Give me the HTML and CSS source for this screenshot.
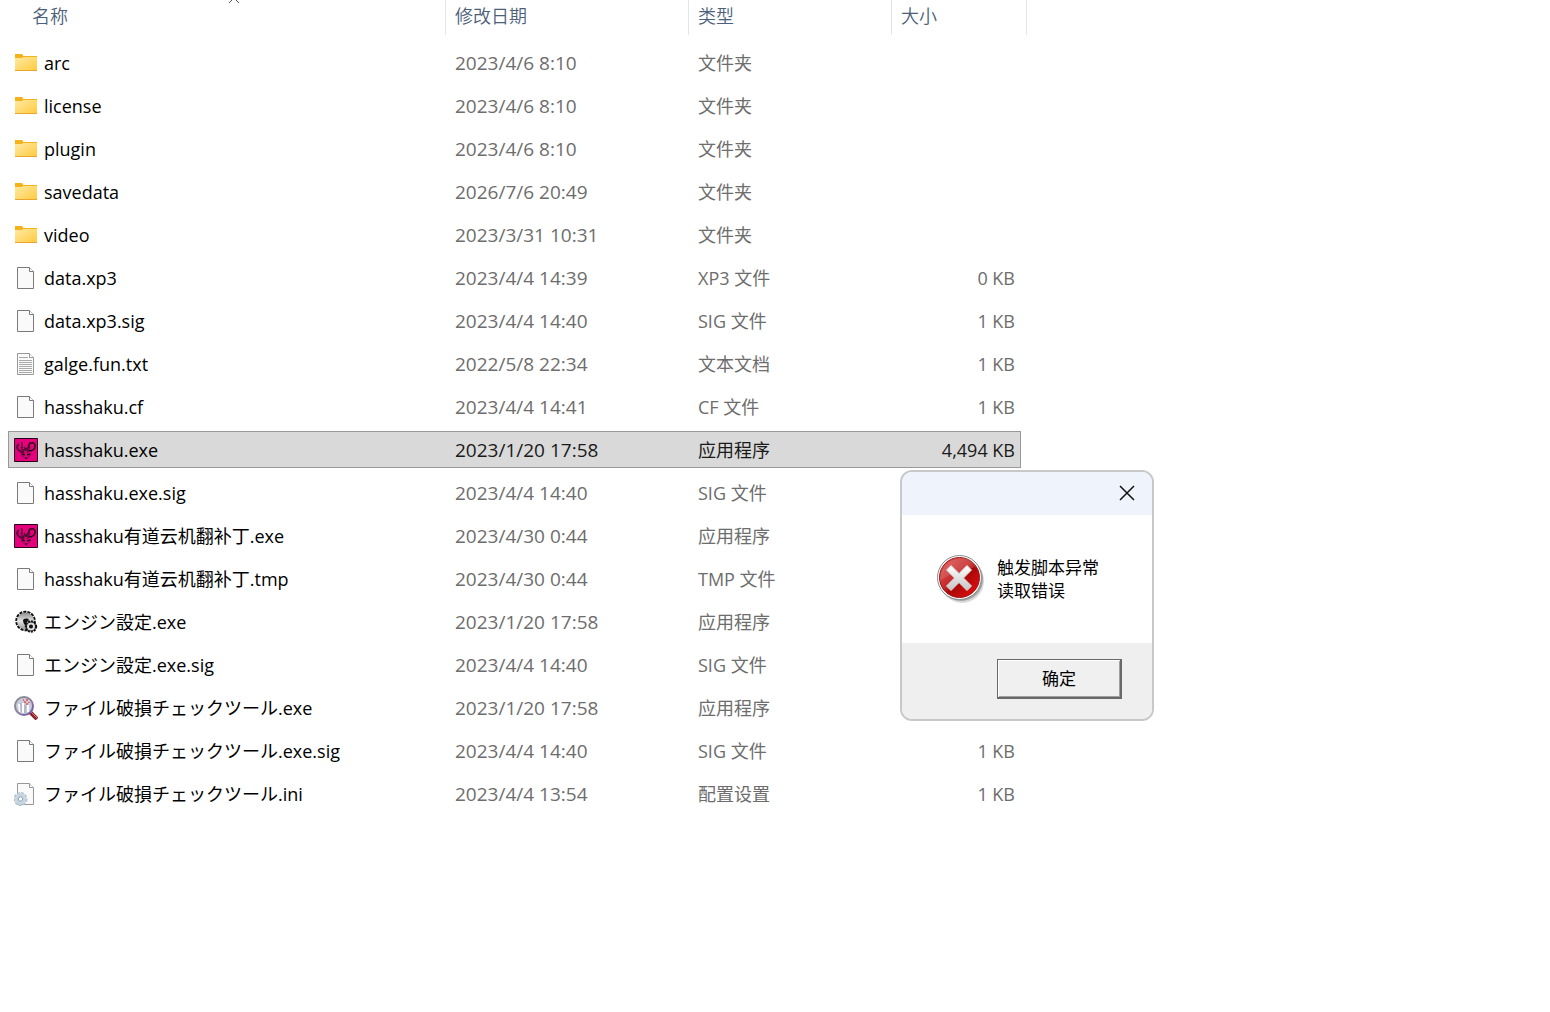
FILE: index.html
```html
<!DOCTYPE html>
<html lang="zh-CN">
<head>
    <meta charset="UTF-8">
    <meta name="viewport" content="width=device-width, initial-scale=1.0">
    <title>hasshaku</title>
    <link rel="stylesheet" href="styles.css">
</head>
<body>

    <!-- Shared icons -->
    <svg class="sprite" aria-hidden="true">
        <defs>
            <linearGradient id="folder-fill" x1="0" y1="0" x2="1" y2="1">
                <stop offset="0" stop-color="#ffe9a3"/>
                <stop offset="1" stop-color="#ffcb3d"/>
            </linearGradient>
            <linearGradient id="gear-fill" x1="0" y1="0" x2="0" y2="1">
                <stop offset="0" stop-color="#8a8a8a"/>
                <stop offset="0.5" stop-color="#e4e4e4"/>
                <stop offset="1" stop-color="#999"/>
            </linearGradient>
            <linearGradient id="rim-fill" x1="0" y1="0" x2="1" y2="1">
                <stop offset="0" stop-color="#8c8c8c"/>
                <stop offset="0.5" stop-color="#8a84a0"/>
                <stop offset="1" stop-color="#6a4fb0"/>
            </linearGradient>
            <linearGradient id="error-fill" x1="0" y1="0" x2="1" y2="1">
                <stop offset="0" stop-color="#e05a5a"/>
                <stop offset="0.45" stop-color="#c42a2a"/>
                <stop offset="0.55" stop-color="#a80808"/>
                <stop offset="1" stop-color="#f01010"/>
            </linearGradient>
            <linearGradient id="cross-fill" x1="0" y1="0" x2="0" y2="1">
                <stop offset="0" stop-color="#fff"/>
                <stop offset="1" stop-color="#c4c4c4"/>
            </linearGradient>
        </defs>
        <symbol id="folder" viewBox="0 0 24 24">
            <path d="M1 3h7l1 1v1h14v3H1z" fill="#f5b21a"/>
            <path d="M1 7h7l1-1h14v14H1z" fill="url(#folder-fill)"/>
            <path d="M1 19.500h22" stroke="#eaa62c"/>
        </symbol>
        <symbol id="file" viewBox="0 0 24 24">
            <path d="M3.500 1.500h12l4 4v17h-16z" fill="#fafafa" stroke="#7a7a7a"/>
            <path d="M15.500 1.500v4h4" fill="#fff" stroke="#7a7a7a"/>
        </symbol>
        <symbol id="text" viewBox="0 0 24 24">
            <path d="M3.500 1.500h12l4 4v17h-16z" fill="#fafafa" stroke="#999"/>
            <path d="M15.500 1.500v4h4" fill="#fff" stroke="#999"/>
            <path d="M5 5.500h9M5 8.500h13M5 10.500h13M5 12.500h13M5 14.500h13M5 16.500h13M5 18.500h13M5 20.500h13" stroke="#a8a8a8"/>
        </symbol>
        <symbol id="game" viewBox="0 0 24 24">
            <path d="M.5.5h23v23H.5z" fill="#e6007e" stroke="#2a0018"/>
            <g fill="none" stroke="#5a0638">
                <path d="M8 10V4M14 10l2-6" stroke-width="1.500"/>
                <path d="M5 6c-3 2-2 6 1 7l4 2" stroke-width="2"/>
                <path d="M15 10c-1-6 6-7 6-2 0 4-4 5-7 5" stroke="#2a0018" stroke-width="1.500"/>
                <path d="m7 9 3 6M16 9l-3 6M9 12h5M10 9l2 3 2-3" stroke-width="1.500"/>
                <path d="m7 15 1 3 4 3 4-3 1-3" stroke="#8a0a50"/>
                <path d="m8 16 3 1M16 16l-3 1M11 20h2" stroke="#2a0018" stroke-width="1.500"/>
            </g>
        </symbol>
        <symbol id="gears" viewBox="0 0 24 24">
            <circle cx="11.500" cy="11" r="9" fill="none" stroke="#111" stroke-width="2.500" stroke-dasharray="3 1"/>
            <circle cx="11.500" cy="11" r="8.500" fill="url(#gear-fill)"/>
            <path d="M9 11c0-3 5-3 6-1l-3 3v3l-2-2z" fill="#111"/>
            <circle cx="17" cy="16.500" r="5" fill="#111"/>
            <circle cx="17" cy="16.500" r="5.200" fill="none" stroke="#111" stroke-width="2" stroke-dasharray="2 1"/>
            <circle cx="17" cy="16.500" r="3" fill="#111" stroke="#ddd" stroke-width="2"/>
        </symbol>
        <symbol id="magnifier" viewBox="0 0 24 24">
            <path d="m16 16 7 7" stroke="#8e2026" stroke-width="4"/>
            <path d="m17 16 6 6" stroke="#e08080"/>
            <circle cx="10" cy="10" r="9" fill="#c9ccda" stroke="url(#rim-fill)" stroke-width="2"/>
            <path d="M5 8l1 8M9 7v10M14 9v7" stroke="#fff" stroke-width="2"/>
            <path d="M7 7v9M11 9v8" stroke="#9fa3b8"/>
            <path d="M9 4h1M10 6h2M13 3v2M12 8h2M15 6v1" stroke="#f04a4a" stroke-width="1.500"/>
        </symbol>
        <symbol id="settings" viewBox="0 0 24 24">
            <path d="M3.500 1.500h12l4 4v17h-16z" fill="#fafafa" stroke="#999"/>
            <path d="M15.500 1.500v4h4" fill="#fff" stroke="#999"/>
            <circle cx="6.500" cy="17" r="6" fill="none" stroke="#b4c5d2" stroke-width="2" stroke-dasharray="3 1"/>
            <circle cx="6.500" cy="17" r="4" fill="#fff" stroke="#c6d5e0" stroke-width="3.500"/>
            <circle cx="6.500" cy="17" r="2.200" fill="#fafafa" stroke="#8fa2b3"/>
        </symbol>
    </svg>

    <main>
        <table class="files">
            <colgroup>
                <col class="col-name">
                <col class="col-date">
                <col class="col-type">
                <col class="col-size">
            </colgroup>
            <thead>
                <tr>
                    <th class="name" aria-sort="ascending">
                        <div class="head">名称
                            <svg class="sort" viewBox="0 0 12 6"><path d="m1 3 5-5 5 5" fill="none" stroke="#555"/></svg>
                        </div>
                    </th>
                    <th><div class="head">修改日期</div></th>
                    <th><div class="head">类型</div></th>
                    <th class="last"><div class="head">大小</div></th>
                </tr>
            </thead>
            <tbody>
                <tr>
                    <td><div class="file"><svg class="icon"><use href="#folder"/></svg>arc</div></td>
                    <td class="date">2023/4/6 8:10</td>
                    <td>文件夹</td>
                    <td></td>
                </tr>
                <tr>
                    <td><div class="file"><svg class="icon"><use href="#folder"/></svg>license</div></td>
                    <td class="date">2023/4/6 8:10</td>
                    <td>文件夹</td>
                    <td></td>
                </tr>
                <tr>
                    <td><div class="file"><svg class="icon"><use href="#folder"/></svg>plugin</div></td>
                    <td class="date">2023/4/6 8:10</td>
                    <td>文件夹</td>
                    <td></td>
                </tr>
                <tr>
                    <td><div class="file"><svg class="icon"><use href="#folder"/></svg>savedata</div></td>
                    <td class="date">2026/7/6 20:49</td>
                    <td>文件夹</td>
                    <td></td>
                </tr>
                <tr>
                    <td><div class="file"><svg class="icon"><use href="#folder"/></svg>video</div></td>
                    <td class="date">2023/3/31 10:31</td>
                    <td>文件夹</td>
                    <td></td>
                </tr>
                <tr>
                    <td><div class="file"><svg class="icon"><use href="#file"/></svg>data.xp3</div></td>
                    <td class="date">2023/4/4 14:39</td>
                    <td>XP3 文件</td>
                    <td>0 KB</td>
                </tr>
                <tr>
                    <td><div class="file"><svg class="icon"><use href="#file"/></svg>data.xp3.sig</div></td>
                    <td class="date">2023/4/4 14:40</td>
                    <td>SIG 文件</td>
                    <td>1 KB</td>
                </tr>
                <tr>
                    <td><div class="file"><svg class="icon"><use href="#text"/></svg>galge.fun.txt</div></td>
                    <td class="date">2022/5/8 22:34</td>
                    <td>文本文档</td>
                    <td>1 KB</td>
                </tr>
                <tr>
                    <td><div class="file"><svg class="icon"><use href="#file"/></svg>hasshaku.cf</div></td>
                    <td class="date">2023/4/4 14:41</td>
                    <td>CF 文件</td>
                    <td>1 KB</td>
                </tr>
                <tr class="selected">
                    <td><div class="file"><svg class="icon"><use href="#game"/></svg>hasshaku.exe</div></td>
                    <td class="date">2023/1/20 17:58</td>
                    <td>应用程序</td>
                    <td>4,494 KB</td>
                </tr>
                <tr>
                    <td><div class="file"><svg class="icon"><use href="#file"/></svg>hasshaku.exe.sig</div></td>
                    <td class="date">2023/4/4 14:40</td>
                    <td>SIG 文件</td>
                    <td></td>
                </tr>
                <tr>
                    <td><div class="file"><svg class="icon"><use href="#game"/></svg>hasshaku有道云机翻补丁.exe</div></td>
                    <td class="date">2023/4/30 0:44</td>
                    <td>应用程序</td>
                    <td></td>
                </tr>
                <tr>
                    <td><div class="file"><svg class="icon"><use href="#file"/></svg>hasshaku有道云机翻补丁.tmp</div></td>
                    <td class="date">2023/4/30 0:44</td>
                    <td>TMP 文件</td>
                    <td></td>
                </tr>
                <tr>
                    <td><div class="file" lang="ja"><svg class="icon"><use href="#gears"/></svg>エンジン設定.exe</div></td>
                    <td class="date">2023/1/20 17:58</td>
                    <td>应用程序</td>
                    <td></td>
                </tr>
                <tr>
                    <td><div class="file" lang="ja"><svg class="icon"><use href="#file"/></svg>エンジン設定.exe.sig</div></td>
                    <td class="date">2023/4/4 14:40</td>
                    <td>SIG 文件</td>
                    <td></td>
                </tr>
                <tr>
                    <td><div class="file" lang="ja"><svg class="icon"><use href="#magnifier"/></svg>ファイル破損チェックツール.exe</div></td>
                    <td class="date">2023/1/20 17:58</td>
                    <td>应用程序</td>
                    <td></td>
                </tr>
                <tr>
                    <td><div class="file" lang="ja"><svg class="icon"><use href="#file"/></svg>ファイル破損チェックツール.exe.sig</div></td>
                    <td class="date">2023/4/4 14:40</td>
                    <td>SIG 文件</td>
                    <td>1 KB</td>
                </tr>
                <tr>
                    <td><div class="file" lang="ja"><svg class="icon"><use href="#settings"/></svg>ファイル破損チェックツール.ini</div></td>
                    <td class="date">2023/4/4 13:54</td>
                    <td>配置设置</td>
                    <td>1 KB</td>
                </tr>
            </tbody>
        </table>
    </main>

    <div class="dialog" role="alertdialog" aria-labelledby="message">
        <div class="titlebar">
            <button class="close" type="button" aria-label="关闭">
                <svg width="16" height="16" viewBox="0 0 16 16"><path d="m1 1 14 14M15 1 1 15" stroke="#111" stroke-width="1.500"/></svg>
            </button>
        </div>
        <div class="message">
            <svg class="error" viewBox="0 0 48 48">
                <circle cx="25" cy="26" r="22" fill="#000" opacity="0.15"/>
                <circle cx="24" cy="24" r="22" fill="#000" opacity="0.25"/>
                <circle cx="22.500" cy="22.500" r="22" fill="#fff" stroke="#8a8a8a"/>
                <circle cx="22.500" cy="22.500" r="20" fill="url(#error-fill)" stroke="#a01818"/>
                <path d="M3 26C3 9 17 3 24 3c9 0 14 4 17 9-10 1-28 6-38 14z" fill="#fff" opacity="0.12"/>
                <path d="m14 10.500 8 8 8-8 4.500 4.500-8 8 8 8-4.500 4.500-8-8-8 8-4.500-4.500 8-8-8-8z" fill="url(#cross-fill)" stroke="#dcdcdc" stroke-linejoin="round"/>
            </svg>
            <p id="message">触发脚本异常<br>读取错误</p>
        </div>
        <div class="actions">
            <button class="ok" type="button">确定</button>
        </div>
    </div>

</body>
</html>
```
FILE: styles.css
```css
body {
    margin: 0;
    background-color: #fff;
    color: #000;
    font-family: "Open Sans", "Noto Sans CJK SC", sans-serif;
    font-size: 18px;
    line-height: 24px;
}

.sprite {
    position: absolute;
    width: 0;
    height: 0;
}

main {
    padding: 0 8px;
    overflow: hidden;
}

/* File list */
.files {
    table-layout: fixed;
    width: 1013px;
    margin-top: -6px;
    border-spacing: 0 6px;
}

.col-name {
    width: 438px;
}

.col-date {
    width: 243px;
}

.col-type {
    width: 203px;
}

.files th {
    padding: 0 0 3px;
    color: #4c607a;
    font-weight: 350;
    text-align: left;
}

.head {
    position: relative;
    box-sizing: border-box;
    height: 35px;
    padding: 4px 9px;
    border-right: 1px solid #e5e5e5;
}

.name .head {
    margin-left: 15px;
}

.last .head {
    margin-right: -6px;
}

.sort {
    position: absolute;
    top: 0;
    left: 50%;
    width: 12px;
    height: 6px;
    margin-left: -6px;
}

.files td {
    height: 37px;
    padding: 0 9px;
    color: #6d6d6d;
    white-space: nowrap;
}

.files td:first-child {
    padding-left: 6px;
    color: #000;
}

.files td:last-child {
    padding-right: 6px;
    text-align: right;
}

.files .date {
    font-size: 19px;
}

.file {
    display: flex;
    align-items: center;
    gap: 6px;
}

.file:lang(ja) {
    font-family: "Open Sans", "Noto Sans CJK JP", sans-serif;
}

.icon {
    width: 24px;
    height: 24px;
}

.selected {
    background-color: #d9d9d9;
    outline: 1px solid #999;
    outline-offset: -1px;
}

.files .selected td {
    color: #1a1a1a;
}

.files .selected td:first-child {
    color: #000;
}

/* Error dialog */
.dialog {
    position: absolute;
    top: 470px;
    left: 900px;
    width: 250px;
    border: 2px solid #c8c8c8;
    border-radius: 12px;
    background-color: #fff;
    overflow: hidden;
    font-size: 17px;
    line-height: 23px;
}

.titlebar {
    display: flex;
    justify-content: flex-end;
    height: 43px;
    background-color: #eff3fb;
}

.close {
    display: flex;
    align-items: center;
    justify-content: center;
    width: 50px;
    height: 41px;
    padding: 0;
    border: 0;
    background: none;
}

.message {
    display: flex;
    align-items: center;
    gap: 12px;
    height: 128px;
    padding-left: 35px;
}

.message p {
    margin: 0;
}

.error {
    width: 48px;
    height: 48px;
}

.actions {
    display: flex;
    justify-content: flex-end;
    padding: 16px 30px 20px;
    background-color: #efefef;
}

.ok {
    width: 125px;
    height: 40px;
    border: 1px solid #696969;
    border-width: 1px 2px 2px 1px;
    background-color: #f0f0f0;
    box-shadow: inset 1px 1px #fff, inset -1px -1px #a0a0a0;
    color: #000;
    font: inherit;
}
```
